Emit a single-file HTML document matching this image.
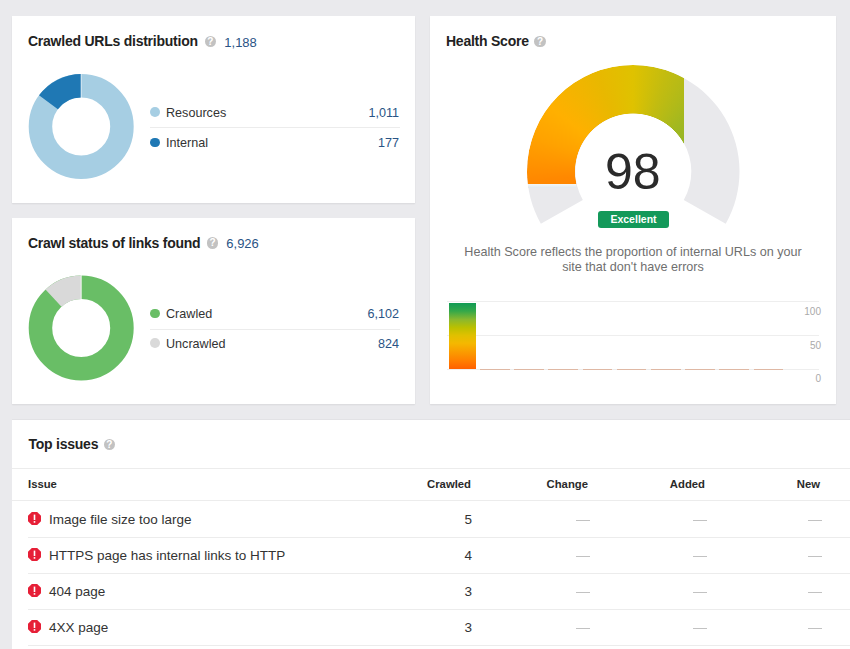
<!DOCTYPE html>
<html><head><meta charset="utf-8">
<style>
*{margin:0;padding:0;box-sizing:border-box}
html{background:#eaeaed;overflow:hidden}
body{width:850px;height:649px;overflow:hidden;font-family:"Liberation Sans",sans-serif;color:#333}
.card{position:absolute;z-index:-1;background:#fff;box-shadow:0 1px 1.5px rgba(0,0,0,0.08)}
.t{position:absolute;line-height:1;white-space:nowrap}
.title{font-weight:bold;font-size:14px;letter-spacing:-0.24px;color:#222}
.q{position:absolute;width:11.2px;height:11.2px;border-radius:50%;background:#c2c2c2;color:#fff;font-size:10px;font-weight:bold;text-align:center;line-height:11.2px}
.leg{font-size:12.6px;color:#333}
.num{color:#2a5485}
.dot{position:absolute;width:9.8px;height:9.8px;border-radius:50%}
.sep{position:absolute;height:1px;background:#ececec}
.th{font-weight:bold;font-size:11.3px;color:#2a2a2a}
.td{font-size:13.5px;color:#333}
.dash{position:absolute;height:1.4px;background:#c2c2c2;width:14px}
.ico{position:absolute;width:13px;height:13px}
</style></head>
<body>

<!-- Card 1 -->
<div class="card" style="left:12px;top:16px;width:403px;height:186.6px"></div>
<div class="t title" style="left:28px;top:34.4px">Crawled URLs distribution</div>
<div class="q" style="left:204.7px;top:35.5px">?</div>
<div class="t num" style="left:224.3px;top:35.8px;font-size:13px">1,188</div>
<svg style="position:absolute;left:0;top:0" width="850" height="649">
  <!-- donut 1 -->
  <g transform="translate(81.2,126.5)">
    <circle r="40.75" fill="none" stroke="#a6cee3" stroke-width="23.5"/>
    <path d="M0,-52.5 A52.5,52.5 0 0 0 -42.2,-31.2 L-23.3,-17.2 A29,29 0 0 1 0,-29 Z" fill="#1f78b4"/>
    <line x1="0" y1="-53" x2="0" y2="-28.5" stroke="#fff" stroke-width="0.8"/>
  </g>
  <!-- donut 2 -->
  <g transform="translate(81.2,328)">
    <circle r="40.75" fill="none" stroke="#69be66" stroke-width="23.5"/>
    <path d="M0,-52.5 A52.5,52.5 0 0 0 -35.7,-38.5 L-19.7,-21.3 A29,29 0 0 1 0,-29 Z" fill="#d9d9d9"/>
    <line x1="0" y1="-53" x2="0" y2="-28.5" stroke="#fff" stroke-width="0.8"/>
  </g>
</svg>
<div class="dot" style="left:150px;top:107.3px;background:#a6cee3"></div>
<div class="t leg" style="left:166px;top:107px">Resources</div>
<div class="t leg num" style="right:451px;top:107px">1,011</div>
<div class="sep" style="left:150px;top:127px;width:250px"></div>
<div class="dot" style="left:150px;top:137.5px;background:#1f78b4"></div>
<div class="t leg" style="left:166px;top:137px">Internal</div>
<div class="t leg num" style="right:451px;top:137px">177</div>

<!-- Card 2 -->
<div class="card" style="left:12px;top:218px;width:403px;height:186px"></div>
<div class="t title" style="left:28px;top:235.8px">Crawl status of links found</div>
<div class="q" style="left:207px;top:237.4px">?</div>
<div class="t num" style="left:226.3px;top:237.3px;font-size:13px">6,926</div>
<div class="dot" style="left:150px;top:308.6px;background:#69be66"></div>
<div class="t leg" style="left:166px;top:308.3px">Crawled</div>
<div class="t leg num" style="right:451px;top:308.3px">6,102</div>
<div class="sep" style="left:150px;top:328.5px;width:250px"></div>
<div class="dot" style="left:150px;top:338.4px;background:#d9d9d9"></div>
<div class="t leg" style="left:166px;top:338.3px">Uncrawled</div>
<div class="t leg num" style="right:451px;top:338.3px">824</div>

<!-- Card 3 Health -->
<div class="card" style="left:430px;top:16px;width:406px;height:388px"></div>
<div class="t title" style="left:446px;top:34.4px">Health Score</div>
<div class="q" style="left:534.4px;top:35.8px">?</div>
<svg style="position:absolute;left:0;top:0" width="850" height="649">
  <path d="M540.87,223.80 A106.2,106.2 0 1 1 725.73,223.80 L683.78,200.06 A58,58 0 1 0 582.82,200.06 Z" fill="#e9e9ec"/>
</svg>
<div style="position:absolute;left:527.8px;top:184px;width:48.5px;height:3.5px;background:linear-gradient(#f4f6f4,#e2e8ee)"></div>
<svg width="0" height="0" style="position:absolute">
</svg>
<div style="position:absolute;left:520px;top:60px;width:164px;height:123.5px;overflow:hidden">
  <div style="position:absolute;left:7.10px;top:5.30px;width:212.4px;height:212.4px;border-radius:50%;
    background:conic-gradient(#dfc200 0deg,#c2bc10 19deg,#a2b820 44deg,#90b428 70deg,#90b428 200deg,#ff7000 200deg,#ff8800 265deg,#ffa200 289deg,#ffb000 308deg,#e8b800 340deg,#dfc200 360deg);
    -webkit-mask:radial-gradient(circle at center,transparent 57.7px,#000 58.3px);mask:radial-gradient(circle at center,transparent 57.7px,#000 58.3px)"></div>
</div>
<div class="t" style="left:605px;top:147px;font-size:50px;color:#2b2b2b">98</div>
<div style="position:absolute;left:598px;top:211px;width:71px;height:17px;border-radius:3px;background:#14995a"></div>
<div class="t" style="left:598px;top:213.6px;width:71px;text-align:center;font-size:10.5px;font-weight:bold;color:#fff">Excellent</div>
<div class="t" style="left:430px;top:245px;width:406px;text-align:center;font-size:12.6px;color:#6f6f6f;line-height:15px;white-space:normal">Health Score reflects the proportion of internal URLs on your<br>site that don't have errors</div>

<!-- bar chart -->
<div class="sep" style="left:447px;top:301px;width:372px;background:#eeeeee"></div>
<div class="sep" style="left:447px;top:335px;width:372px;background:#eeeeee"></div>
<div class="sep" style="left:447px;top:369px;width:372px;background:#eeeeee"></div>
<div style="position:absolute;left:449px;top:303px;width:27px;height:66px;background:linear-gradient(#119b55 0%,#33a84a 12%,#8ab82e 25%,#bac000 37%,#e0c000 49%,#f5b800 61%,#ff8000 87%,#ff6000 100%)"></div>
<div style="position:absolute;left:480.0px;top:369px;width:29.5px;height:1px;background:#dfb8a4"></div>
<div style="position:absolute;left:514.2px;top:369px;width:29.5px;height:1px;background:#dfb8a4"></div>
<div style="position:absolute;left:548.4px;top:369px;width:29.5px;height:1px;background:#dfb8a4"></div>
<div style="position:absolute;left:582.6px;top:369px;width:29.5px;height:1px;background:#dfb8a4"></div>
<div style="position:absolute;left:616.8px;top:369px;width:29.5px;height:1px;background:#dfb8a4"></div>
<div style="position:absolute;left:651.0px;top:369px;width:29.5px;height:1px;background:#dfb8a4"></div>
<div style="position:absolute;left:685.2px;top:369px;width:29.5px;height:1px;background:#dfb8a4"></div>
<div style="position:absolute;left:719.4px;top:369px;width:29.5px;height:1px;background:#dfb8a4"></div>
<div style="position:absolute;left:753.6px;top:369px;width:29.5px;height:1px;background:#dfb8a4"></div>
<div class="t" style="right:29px;top:306.5px;font-size:10px;color:#aaa">100</div>
<div class="t" style="right:29px;top:340.5px;font-size:10px;color:#aaa">50</div>
<div class="t" style="right:29px;top:373.5px;font-size:10px;color:#aaa">0</div>

<!-- Card 4 Top issues -->
<div class="card" style="left:12px;top:420px;width:838px;height:240px;box-shadow:0 -1px 0 rgba(0,0,0,0.03)"></div>
<div class="t title" style="left:28.5px;top:437.2px">Top issues</div>
<div class="q" style="left:103.7px;top:438.8px">?</div>
<div class="sep" style="left:12px;top:468px;width:838px"></div>
<div class="t th" style="left:28px;top:479px">Issue</div>
<div class="t th" style="right:379px;top:479px">Crawled</div>
<div class="t th" style="right:262px;top:479px">Change</div>
<div class="t th" style="right:145px;top:479px">Added</div>
<div class="t th" style="right:30px;top:479px">New</div>
<div class="sep" style="left:12px;top:500px;width:838px"></div>

<svg width="0" height="0" style="position:absolute">
  <defs>
    <symbol id="err" viewBox="0 0 13 13">
      <polygon points="3.8,0 9.2,0 13,3.8 13,9.2 9.2,13 3.8,13 0,9.2 0,3.8" fill="#e61f37"/>
      <rect x="5.7" y="2.6" width="1.6" height="5.4" fill="#fff"/>
      <rect x="5.7" y="9.1" width="1.6" height="1.6" fill="#fff"/>
    </symbol>
  </defs>
</svg>

<svg class="ico" style="left:28px;top:512px"><use href="#err"/></svg>
<div class="t td" style="left:49px;top:512.5px">Image file size too large</div>
<div class="t td" style="right:378px;top:512.5px">5</div>
<div class="dash" style="left:576px;top:520px"></div>
<div class="dash" style="left:692.5px;top:520px"></div>
<div class="dash" style="left:808px;top:520px"></div>
<div class="sep" style="left:28px;top:537px;width:822px"></div>

<svg class="ico" style="left:28px;top:548px"><use href="#err"/></svg>
<div class="t td" style="left:49px;top:548.5px">HTTPS page has internal links to HTTP</div>
<div class="t td" style="right:378px;top:548.5px">4</div>
<div class="dash" style="left:576px;top:556px"></div>
<div class="dash" style="left:692.5px;top:556px"></div>
<div class="dash" style="left:808px;top:556px"></div>
<div class="sep" style="left:28px;top:573px;width:822px"></div>

<svg class="ico" style="left:28px;top:584px"><use href="#err"/></svg>
<div class="t td" style="left:49px;top:584.5px">404 page</div>
<div class="t td" style="right:378px;top:584.5px">3</div>
<div class="dash" style="left:576px;top:592px"></div>
<div class="dash" style="left:692.5px;top:592px"></div>
<div class="dash" style="left:808px;top:592px"></div>
<div class="sep" style="left:28px;top:609px;width:822px"></div>

<svg class="ico" style="left:28px;top:620px"><use href="#err"/></svg>
<div class="t td" style="left:49px;top:620.5px">4XX page</div>
<div class="t td" style="right:378px;top:620.5px">3</div>
<div class="dash" style="left:576px;top:628px"></div>
<div class="dash" style="left:692.5px;top:628px"></div>
<div class="dash" style="left:808px;top:628px"></div>
<div class="sep" style="left:28px;top:645px;width:822px"></div>

</body></html>
